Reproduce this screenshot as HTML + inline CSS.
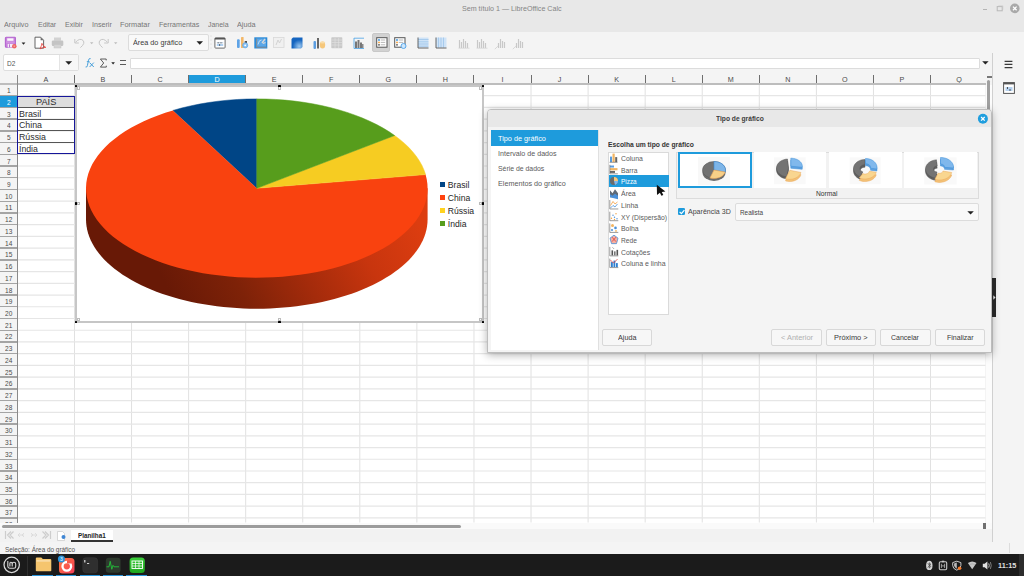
<!DOCTYPE html><html><head><meta charset="utf-8"><style>
html,body{margin:0;padding:0}
body{width:1024px;height:576px;overflow:hidden;position:relative;background:#f4f4f4;font-family:"Liberation Sans",sans-serif}
.a{position:absolute}
.t{position:absolute;white-space:nowrap}
svg{overflow:visible}
</style></head><body>
<div class="a" style="left:0px;top:0px;width:1024px;height:31.8px;background:#e8e8e8;"></div>
<div class="t" style="left:461.7px;top:5px;font-size:8px;line-height:8px;color:#858585;transform:scaleX(0.89);transform-origin:0 0;">Sem título 1 — LibreOffice Calc</div>
<div class="a" style="left:983px;top:9.2px;width:4.2px;height:1px;background:#b4b4b4;"></div>
<svg class="a" style="left:996px;top:5px;" width="8" height="7" viewBox="0 0 8 7"><rect x="1.2" y="1.6" width="5" height="4.2" fill="none" stroke="#b8b8b8" stroke-width="1"/><path d="M2.4 0.9h4.4v3.8" fill="none" stroke="#c8c8c8" stroke-width="0.7"/></svg>
<svg class="a" style="left:1009px;top:3px;" width="12" height="11" viewBox="0 0 12 11"><circle cx="5.8" cy="5.4" r="4.8" fill="#a9a9a9"/><path d="M4 3.6l3.6 3.6M7.6 3.6l-3.6 3.6" stroke="#fff" stroke-width="1.3"/></svg>
<div class="t" style="left:4.4px;top:21px;font-size:8px;line-height:8px;color:#767676;transform:scaleX(0.9);transform-origin:0 0;">Arquivo</div>
<div class="t" style="left:37.8px;top:21px;font-size:8px;line-height:8px;color:#767676;transform:scaleX(0.87);transform-origin:0 0;">Editar</div>
<div class="t" style="left:65.4px;top:21px;font-size:8px;line-height:8px;color:#767676;transform:scaleX(0.89);transform-origin:0 0;">Exibir</div>
<div class="t" style="left:91.7px;top:21px;font-size:8px;line-height:8px;color:#767676;transform:scaleX(0.89);transform-origin:0 0;">Inserir</div>
<div class="t" style="left:120.1px;top:21px;font-size:8px;line-height:8px;color:#767676;transform:scaleX(0.92);transform-origin:0 0;">Formatar</div>
<div class="t" style="left:158.6px;top:21px;font-size:8px;line-height:8px;color:#767676;transform:scaleX(0.89);transform-origin:0 0;">Ferramentas</div>
<div class="t" style="left:208px;top:21px;font-size:8px;line-height:8px;color:#767676;transform:scaleX(0.87);transform-origin:0 0;">Janela</div>
<div class="t" style="left:237.3px;top:21px;font-size:8px;line-height:8px;color:#767676;transform:scaleX(0.91);transform-origin:0 0;">Ajuda</div>
<svg class="a" style="left:4px;top:36px;" width="16" height="14" viewBox="0 0 16 14"><rect x="1.4" y="1.3" width="10" height="10" rx="0.8" fill="#c782dc" stroke="#b464cf" stroke-width="1.1"/><rect x="3.2" y="2.3" width="6.3" height="2.5" fill="#fbf6fc"/><path d="M2.2 6.1H10.6" stroke="#dfb0ec" stroke-width="0.6"/><rect x="3.7" y="7.9" width="5.8" height="3.5" fill="#f4ecf7"/><rect x="5" y="8.3" width="1" height="3" fill="#b870d0"/><circle cx="10.3" cy="10.2" r="2.3" fill="#ee6666"/><path d="M9.5 10.2h1.6M10.3 9.4v1.6" stroke="#f9c0c0" stroke-width="0.5"/></svg>
<svg class="a" style="left:20.5px;top:41.5px;" width="5" height="4" viewBox="0 0 5 4"><path d="M0.6 0.6h3.8l-1.9 2.1z" fill="#222"/></svg>
<svg class="a" style="left:34px;top:36px;" width="13" height="14" viewBox="0 0 13 14"><path d="M1 1.2H6.6L9.6 4.2V12.2H1Z" fill="#fff" stroke="#555" stroke-width="0.9"/><path d="M6.6 1.2V4.2H9.6Z" fill="#6a6a6a"/><path d="M6 12.8Q7.6 9.8 7.9 7.3Q8.8 10.3 11.8 11.4Q8.8 11.2 6 12.8Z" fill="none" stroke="#e8403a" stroke-width="0.8"/></svg>
<svg class="a" style="left:51px;top:37px;" width="14" height="12" viewBox="0 0 14 12"><rect x="3" y="0.5" width="7" height="3.2" fill="#d2d2d2"/><rect x="0.8" y="3.5" width="11.5" height="5.5" rx="1.2" fill="#c4c4c4"/><rect x="3" y="7.6" width="7" height="3.4" fill="#d4d4d4" stroke="#c4c4c4" stroke-width="0.5"/></svg>
<svg class="a" style="left:73px;top:36px;" width="13" height="13" viewBox="0 0 13 13"><path d="M2.6 6.2Q6.8 1.6 10 4.4Q12.6 7.3 7.4 11.6" fill="none" stroke="#c6c6c6" stroke-width="1"/><path d="M1.8 3V7H5.8" fill="none" stroke="#c6c6c6" stroke-width="1"/></svg>
<svg class="a" style="left:89.5px;top:42px;" width="4" height="3" viewBox="0 0 4 3"><path d="M0 0.3h3.4l-1.7 2z" fill="#bdbdbd"/></svg>
<svg class="a" style="left:97px;top:36px;" width="13" height="13" viewBox="0 0 13 13"><path d="M10.4 6.2Q6.2 1.6 3 4.4Q0.4 7.3 5.6 11.6" fill="none" stroke="#c6c6c6" stroke-width="1"/><path d="M11.2 3V7H7.2" fill="none" stroke="#c6c6c6" stroke-width="1"/></svg>
<svg class="a" style="left:113.5px;top:42px;" width="4" height="3" viewBox="0 0 4 3"><path d="M0 0.3h3.4l-1.7 2z" fill="#bdbdbd"/></svg>
<div class="a" style="left:127.75px;top:33.6px;width:80.75px;height:17.15px;background:#f9f9f9;box-sizing:border-box;border:1px solid #dcdcdc;border-radius:2px"></div>
<div class="t" style="left:133.1px;top:39px;font-size:7.8px;line-height:7.8px;color:#3a3a3a;transform:scaleX(0.93);transform-origin:0 0;">Área do gráfico</div>
<svg class="a" style="left:196px;top:41px;" width="8" height="4" viewBox="0 0 8 4"><path d="M0.5 0.3h6.5l-3.25 3.4z" fill="#222"/></svg>
<svg class="a" style="left:209.5px;top:34px;" width="2" height="17" viewBox="0 0 2 17"><circle cx="1" cy="2" r="0.5" fill="#ccc"/><circle cx="1" cy="6" r="0.5" fill="#ccc"/><circle cx="1" cy="10" r="0.5" fill="#ccc"/><circle cx="1" cy="14" r="0.5" fill="#ccc"/></svg>
<svg class="a" style="left:214px;top:36.5px;" width="12" height="12" viewBox="0 0 12 12"><rect x="0.9" y="0.9" width="10.2" height="10.2" rx="0.8" fill="#fff" stroke="#6a6a6a" stroke-width="1"/><rect x="0.9" y="0.9" width="10.2" height="1.6" fill="#555"/><path d="M2.8 5.8h6.4" stroke="#8aa6c4" stroke-width="0.7"/><path d="M2.8 8h6.4" stroke="#3d8ad8" stroke-width="0.8"/><path d="M4.2 5.2v1.2M7 5.2v1.2" stroke="#555" stroke-width="0.8"/><path d="M5.6 7.3v1.4" stroke="#333" stroke-width="0.9"/></svg>
<svg class="a" style="left:236px;top:36px;" width="14" height="13" viewBox="0 0 14 13"><rect x="1" y="3.3" width="2.7" height="8.7" rx="1" fill="#5ea3e6"/><rect x="5" y="1" width="2.6" height="11" rx="0.6" fill="#f3b869"/><rect x="8.7" y="5" width="2.3" height="2" fill="#555"/><circle cx="9.2" cy="9.3" r="2.6" fill="#8cc2f2" stroke="#4d9de6" stroke-width="0.6"/><circle cx="9.2" cy="9.3" r="0.9" fill="#fff"/></svg>
<svg class="a" style="left:253.5px;top:36.5px;" width="14" height="12" viewBox="0 0 14 12"><rect x="0.3" y="0.3" width="13" height="11.2" fill="#2b8ad8"/><rect x="2.2" y="1.5" width="9.8" height="8.2" fill="#5aa7e8"/><path d="M2.6 1.5v8.8h10" fill="none" stroke="#8a8a8a" stroke-width="0.9"/><path d="M4 7.5q1-5 3.5-4.5" fill="none" stroke="#e8f2fb" stroke-width="0.7"/><path d="M8 6l3-4M9 6.5l2.5-1" stroke="#d8d8d8" stroke-width="1.3"/></svg>
<svg class="a" style="left:272.5px;top:37px;" width="12" height="11" viewBox="0 0 12 11"><rect x="0.5" y="0.5" width="10.5" height="10" fill="#f0f0f0" stroke="#d8d8d8" stroke-width="0.8"/><path d="M3 8l2-5 1.5 3 2-4" fill="none" stroke="#cfcfcf" stroke-width="0.9"/></svg>
<svg class="a" style="left:290.5px;top:37px;" width="12" height="12" viewBox="0 0 12 12"><defs><radialGradient id="ge" cx="0.7" cy="0.8" r="0.6"><stop offset="0" stop-color="#9cc8f0"/><stop offset="1" stop-color="#1565c0"/></radialGradient></defs><path d="M2 0.5h9.5v9.5l-1.5 1.5h-9.5v-9.5z" fill="url(#ge)"/></svg>
<svg class="a" style="left:312.5px;top:36.5px;" width="14" height="13" viewBox="0 0 14 13"><rect x="0.5" y="4" width="2.5" height="8" rx="1" fill="#5b9de0"/><rect x="4" y="1" width="2" height="10.5" fill="#666"/><ellipse cx="9.5" cy="8" rx="2.7" ry="3.6" fill="#f6c77a"/><ellipse cx="9.5" cy="5.5" rx="2.7" ry="1" fill="#f9dca8"/></svg>
<svg class="a" style="left:331px;top:36.8px;" width="12" height="12" viewBox="0 0 12 12"><rect x="0.3" y="0.3" width="11" height="11" rx="0.8" fill="#c9c9c9"/><path d="M0.5 3h10.8M0.5 5.5h10.8M0.5 8h10.8M4 1v10M7.6 1v10" stroke="#e2e2e2" stroke-width="0.6"/></svg>
<svg class="a" style="left:353px;top:36.5px;" width="12" height="12" viewBox="0 0 12 12"><path d="M1 1.2h10" stroke="#5aa9e6" stroke-width="0.9"/><path d="M1 1v10.5h10" fill="none" stroke="#5aa9e6" stroke-width="0.9"/><rect x="2" y="4.5" width="2" height="6.5" fill="#777"/><rect x="4.5" y="3" width="2" height="8" fill="#777"/><rect x="7" y="5.5" width="2" height="5.5" fill="#777"/><rect x="9" y="7" width="1.5" height="4" fill="#888"/></svg>
<div class="a" style="left:372px;top:33.3px;width:18px;height:18.4px;background:#d2d2d2;box-sizing:border-box;border:1px solid #c8c8c8;border-radius:2px"></div>
<svg class="a" style="left:375.5px;top:37px;" width="12" height="11" viewBox="0 0 12 11"><rect x="0.7" y="0.7" width="10.3" height="9.5" fill="#fff" stroke="#555" stroke-width="1"/><circle cx="3" cy="3" r="0.9" fill="#2f8fdc"/><circle cx="3" cy="5.4" r="0.9" fill="#f39c34"/><circle cx="3" cy="7.8" r="0.9" fill="#555"/><path d="M4.7 3h4.5M4.7 5.4h4.5M4.7 7.8h4.5" stroke="#999" stroke-width="0.7"/></svg>
<svg class="a" style="left:393.5px;top:37px;" width="13" height="12" viewBox="0 0 13 12"><rect x="0.7" y="0.7" width="10.3" height="9.5" fill="#fff" stroke="#555" stroke-width="1"/><circle cx="3" cy="3" r="0.9" fill="#2f8fdc"/><circle cx="3" cy="5.4" r="0.9" fill="#f39c34"/><circle cx="3" cy="7.8" r="0.9" fill="#555"/><path d="M4.7 3h4.5M4.7 5.4h4.5" stroke="#999" stroke-width="0.7"/><circle cx="9.5" cy="9" r="2.5" fill="#cfe6fb" stroke="#4da3ea" stroke-width="0.9"/></svg>
<svg class="a" style="left:416.5px;top:37px;" width="13" height="12" viewBox="0 0 13 12"><rect x="1" y="0.5" width="10.5" height="10" fill="#cfe3f7"/><path d="M1 2.5h10.5M1 4.8h10.5M1 7h10.5M1 9.2h10.5" stroke="#8bbbe6" stroke-width="0.6"/><path d="M1 0.5v10.5h10.5" fill="none" stroke="#555" stroke-width="0.9"/></svg>
<svg class="a" style="left:434.5px;top:37px;" width="13" height="12" viewBox="0 0 13 12"><rect x="1" y="0.5" width="10.5" height="10" fill="#cfe3f7"/><path d="M3.5 0.5v10M6 0.5v10M8.5 0.5v10" stroke="#8bbbe6" stroke-width="0.6"/><path d="M1 0.5v10.5h10.5" fill="none" stroke="#555" stroke-width="0.9"/></svg>
<svg class="a" style="left:457.5px;top:37px;" width="12" height="12" viewBox="0 0 12 12"><path d="M1.5 3v8M3.5 5v6M5.5 2v9M7.5 4v7M9.5 6v5" stroke="#c8c8c8" stroke-width="1.2"/><path d="M0.5 11.2h11" stroke="#d0d0d0" stroke-width="0.7"/></svg>
<svg class="a" style="left:475.5px;top:37px;" width="12" height="12" viewBox="0 0 12 12"><path d="M1.5 3v8M3.5 5v6M5.5 2v9M7.5 4v7M9.5 6v5" stroke="#c8c8c8" stroke-width="1.2"/><path d="M0.5 11.2h11" stroke="#d0d0d0" stroke-width="0.7"/></svg>
<svg class="a" style="left:493.5px;top:36.5px;" width="12" height="13" viewBox="0 0 12 13"><path d="M4.5 6v5M6.5 2v9M8.5 4v7M10.5 5v6" stroke="#c8c8c8" stroke-width="1.2"/><path d="M0.8 12.2l3-3" stroke="#cfcfcf" stroke-width="0.8"/></svg>
<svg class="a" style="left:511.5px;top:36.5px;" width="12" height="13" viewBox="0 0 12 13"><path d="M4.5 6v5M6.5 2v9M8.5 4v7M10.5 5v6" stroke="#c8c8c8" stroke-width="1.2"/><path d="M0.8 12.2l3-3" stroke="#cfcfcf" stroke-width="0.8"/></svg>
<div class="a" style="left:2.6px;top:54.2px;width:76px;height:17.2px;background:#ffffff;box-sizing:border-box;border:1px solid #dedede;border-radius:2px"></div>
<div class="a" style="left:58.8px;top:55.3px;width:18.7px;height:15px;background:#f7f7f7;border-left:1px solid #e4e4e4"></div>
<div class="t" style="left:6.9px;top:60px;font-size:7.2px;line-height:7.2px;color:#555;transform:scaleX(0.91);transform-origin:0 0;">D2</div>
<svg class="a" style="left:64.5px;top:60.5px;" width="8" height="4" viewBox="0 0 8 4"><path d="M0.3 0.3h6.8l-3.4 3.4z" fill="#222"/></svg>
<svg class="a" style="left:0px;top:0px;" width="1024" height="576" viewBox="0 0 1024 576"><path d="M90.6 58.6 Q89 58 88.5 60.2 L87.4 65.6 Q87 67.6 85.6 67" fill="none" stroke="#3d9ad8" stroke-width="0.95"/><path d="M86.8 61.6 H89.6" stroke="#3d9ad8" stroke-width="0.8"/><path d="M89.6 62.6 L93.8 67 M93.8 62.6 L89.6 67" stroke="#3d9ad8" stroke-width="0.95"/><path d="M106.2 60.4 V59 H100.4 L103.7 63 L100.4 67.1 H106.3 V65.7" fill="none" stroke="#4a4a4a" stroke-width="0.9" stroke-linejoin="miter"/></svg>
<svg class="a" style="left:111px;top:62px;" width="5" height="3" viewBox="0 0 5 3"><path d="M0.3 0.2h3.6l-1.8 2.2z" fill="#222"/></svg>
<div class="a" style="left:120.3px;top:60.2px;width:6.2px;height:1.1px;background:#5a5a5a;"></div>
<div class="a" style="left:120.3px;top:63.6px;width:6.2px;height:1.1px;background:#5a5a5a;"></div>
<div class="a" style="left:130.2px;top:57.5px;width:850px;height:11px;background:#ffffff;box-sizing:border-box;border:1px solid #dcdcdc;border-radius:1px"></div>
<svg class="a" style="left:982px;top:60.5px;" width="7" height="4" viewBox="0 0 7 4"><path d="M0.2 0.2h6.4l-3.2 3.4z" fill="#222"/></svg>
<div class="a" style="left:992.2px;top:53.2px;width:0.9px;height:489px;background:#d6d6d6;"></div>
<svg class="a" style="left:1004px;top:59.5px;" width="10" height="9" viewBox="0 0 10 9"><path d="M0.6 1.3h7.8M0.6 4.4h7.8M0.6 7.6h7.8" stroke="#3a3a3a" stroke-width="1.2"/></svg>
<svg class="a" style="left:1002.5px;top:81.5px;" width="12" height="12" viewBox="0 0 12 12"><rect x="0.6" y="0.6" width="10.8" height="10.8" fill="#fff" stroke="#555" stroke-width="1"/><rect x="0.6" y="0.6" width="10.8" height="1.8" fill="#555"/><path d="M2.5 6h7M2.5 8h7" stroke="#4a90d9" stroke-width="0.8"/><path d="M4.5 5v2M7 7v2" stroke="#333" stroke-width="0.8"/></svg>
<div class="a" style="left:0px;top:74.8px;width:985.5px;height:8.8px;background:#f4f4f4;"></div>
<div class="a" style="left:18.4px;top:85px;width:967.1px;height:437.5px;background:#ffffff;"></div>
<svg class="a" style="left:0px;top:0px;pointer-events:none" width="1024" height="576" viewBox="0 0 1024 576"><path d="M74.47 85 V522.5" stroke="#e1e1e1" stroke-width="1"/><path d="M131.54 85 V522.5" stroke="#e1e1e1" stroke-width="1"/><path d="M188.61 85 V522.5" stroke="#e1e1e1" stroke-width="1"/><path d="M245.68 85 V522.5" stroke="#e1e1e1" stroke-width="1"/><path d="M302.75 85 V522.5" stroke="#e1e1e1" stroke-width="1"/><path d="M359.82 85 V522.5" stroke="#e1e1e1" stroke-width="1"/><path d="M416.89 85 V522.5" stroke="#e1e1e1" stroke-width="1"/><path d="M473.96 85 V522.5" stroke="#e1e1e1" stroke-width="1"/><path d="M531.03 85 V522.5" stroke="#e1e1e1" stroke-width="1"/><path d="M588.1 85 V522.5" stroke="#e1e1e1" stroke-width="1"/><path d="M645.17 85 V522.5" stroke="#e1e1e1" stroke-width="1"/><path d="M702.24 85 V522.5" stroke="#e1e1e1" stroke-width="1"/><path d="M759.31 85 V522.5" stroke="#e1e1e1" stroke-width="1"/><path d="M816.38 85 V522.5" stroke="#e1e1e1" stroke-width="1"/><path d="M873.45 85 V522.5" stroke="#e1e1e1" stroke-width="1"/><path d="M930.52 85 V522.5" stroke="#e1e1e1" stroke-width="1"/><path d="M17.4 95.63 H985.5" stroke="#e6e6e6" stroke-width="1.2"/><path d="M17.4 107.36 H985.5" stroke="#e6e6e6" stroke-width="1.2"/><path d="M17.4 119.09 H985.5" stroke="#e6e6e6" stroke-width="1.2"/><path d="M17.4 130.82 H985.5" stroke="#e6e6e6" stroke-width="1.2"/><path d="M17.4 142.55 H985.5" stroke="#e6e6e6" stroke-width="1.2"/><path d="M17.4 154.28 H985.5" stroke="#e6e6e6" stroke-width="1.2"/><path d="M17.4 166.01 H985.5" stroke="#e6e6e6" stroke-width="1.2"/><path d="M17.4 177.74 H985.5" stroke="#e6e6e6" stroke-width="1.2"/><path d="M17.4 189.47 H985.5" stroke="#e6e6e6" stroke-width="1.2"/><path d="M17.4 201.2 H985.5" stroke="#e6e6e6" stroke-width="1.2"/><path d="M17.4 212.93 H985.5" stroke="#e6e6e6" stroke-width="1.2"/><path d="M17.4 224.66 H985.5" stroke="#e6e6e6" stroke-width="1.2"/><path d="M17.4 236.39 H985.5" stroke="#e6e6e6" stroke-width="1.2"/><path d="M17.4 248.12 H985.5" stroke="#e6e6e6" stroke-width="1.2"/><path d="M17.4 259.85 H985.5" stroke="#e6e6e6" stroke-width="1.2"/><path d="M17.4 271.58 H985.5" stroke="#e6e6e6" stroke-width="1.2"/><path d="M17.4 283.31 H985.5" stroke="#e6e6e6" stroke-width="1.2"/><path d="M17.4 295.04 H985.5" stroke="#e6e6e6" stroke-width="1.2"/><path d="M17.4 306.77 H985.5" stroke="#e6e6e6" stroke-width="1.2"/><path d="M17.4 318.5 H985.5" stroke="#e6e6e6" stroke-width="1.2"/><path d="M17.4 330.23 H985.5" stroke="#e6e6e6" stroke-width="1.2"/><path d="M17.4 341.96 H985.5" stroke="#e6e6e6" stroke-width="1.2"/><path d="M17.4 353.69 H985.5" stroke="#e6e6e6" stroke-width="1.2"/><path d="M17.4 365.42 H985.5" stroke="#e6e6e6" stroke-width="1.2"/><path d="M17.4 377.15 H985.5" stroke="#e6e6e6" stroke-width="1.2"/><path d="M17.4 388.88 H985.5" stroke="#e6e6e6" stroke-width="1.2"/><path d="M17.4 400.61 H985.5" stroke="#e6e6e6" stroke-width="1.2"/><path d="M17.4 412.34 H985.5" stroke="#e6e6e6" stroke-width="1.2"/><path d="M17.4 424.07 H985.5" stroke="#e6e6e6" stroke-width="1.2"/><path d="M17.4 435.8 H985.5" stroke="#e6e6e6" stroke-width="1.2"/><path d="M17.4 447.53 H985.5" stroke="#e6e6e6" stroke-width="1.2"/><path d="M17.4 459.26 H985.5" stroke="#e6e6e6" stroke-width="1.2"/><path d="M17.4 470.99 H985.5" stroke="#e6e6e6" stroke-width="1.2"/><path d="M17.4 482.72 H985.5" stroke="#e6e6e6" stroke-width="1.2"/><path d="M17.4 494.45 H985.5" stroke="#e6e6e6" stroke-width="1.2"/><path d="M17.4 506.18 H985.5" stroke="#e6e6e6" stroke-width="1.2"/><path d="M17.4 517.91 H985.5" stroke="#e6e6e6" stroke-width="1.2"/></svg>
<div class="t" style="left:43.53px;top:76px;font-size:7.2px;line-height:7.2px;color:#4a4a4a;">A</div>
<div class="a" style="left:73.97px;top:75px;width:1px;height:9px;background:#6e6e6e;"></div>
<div class="t" style="left:100.6px;top:76px;font-size:7.2px;line-height:7.2px;color:#4a4a4a;">B</div>
<div class="a" style="left:131.04px;top:75px;width:1px;height:9px;background:#6e6e6e;"></div>
<div class="t" style="left:157.48px;top:76px;font-size:7.2px;line-height:7.2px;color:#4a4a4a;">C</div>
<div class="a" style="left:188.11px;top:75px;width:1px;height:9px;background:#6e6e6e;"></div>
<div class="a" style="left:188.61px;top:74.8px;width:57.07px;height:9px;background:#1e9bdc;"></div>
<div class="t" style="left:214.55px;top:76px;font-size:7.2px;line-height:7.2px;color:#ffffff;">D</div>
<div class="a" style="left:245.18px;top:75px;width:1px;height:9px;background:#6e6e6e;"></div>
<div class="t" style="left:271.81px;top:76px;font-size:7.2px;line-height:7.2px;color:#4a4a4a;">E</div>
<div class="a" style="left:302.25px;top:75px;width:1px;height:9px;background:#6e6e6e;"></div>
<div class="t" style="left:329.09px;top:76px;font-size:7.2px;line-height:7.2px;color:#4a4a4a;">F</div>
<div class="a" style="left:359.32px;top:75px;width:1px;height:9px;background:#6e6e6e;"></div>
<div class="t" style="left:385.55px;top:76px;font-size:7.2px;line-height:7.2px;color:#4a4a4a;">G</div>
<div class="a" style="left:416.39px;top:75px;width:1px;height:9px;background:#6e6e6e;"></div>
<div class="t" style="left:442.83px;top:76px;font-size:7.2px;line-height:7.2px;color:#4a4a4a;">H</div>
<div class="a" style="left:473.46px;top:75px;width:1px;height:9px;background:#6e6e6e;"></div>
<div class="t" style="left:501.49px;top:76px;font-size:7.2px;line-height:7.2px;color:#4a4a4a;">I</div>
<div class="a" style="left:530.53px;top:75px;width:1px;height:9px;background:#6e6e6e;"></div>
<div class="t" style="left:557.76px;top:76px;font-size:7.2px;line-height:7.2px;color:#4a4a4a;">J</div>
<div class="a" style="left:587.6px;top:75px;width:1px;height:9px;background:#6e6e6e;"></div>
<div class="t" style="left:614.23px;top:76px;font-size:7.2px;line-height:7.2px;color:#4a4a4a;">K</div>
<div class="a" style="left:644.67px;top:75px;width:1px;height:9px;background:#6e6e6e;"></div>
<div class="t" style="left:671.7px;top:76px;font-size:7.2px;line-height:7.2px;color:#4a4a4a;">L</div>
<div class="a" style="left:701.74px;top:75px;width:1px;height:9px;background:#6e6e6e;"></div>
<div class="t" style="left:727.78px;top:76px;font-size:7.2px;line-height:7.2px;color:#4a4a4a;">M</div>
<div class="a" style="left:758.81px;top:75px;width:1px;height:9px;background:#6e6e6e;"></div>
<div class="t" style="left:785.25px;top:76px;font-size:7.2px;line-height:7.2px;color:#4a4a4a;">N</div>
<div class="a" style="left:815.88px;top:75px;width:1px;height:9px;background:#6e6e6e;"></div>
<div class="t" style="left:842.11px;top:76px;font-size:7.2px;line-height:7.2px;color:#4a4a4a;">O</div>
<div class="a" style="left:872.95px;top:75px;width:1px;height:9px;background:#6e6e6e;"></div>
<div class="t" style="left:899.58px;top:76px;font-size:7.2px;line-height:7.2px;color:#4a4a4a;">P</div>
<div class="a" style="left:930.02px;top:75px;width:1px;height:9px;background:#6e6e6e;"></div>
<div class="t" style="left:956.25px;top:76px;font-size:7.2px;line-height:7.2px;color:#4a4a4a;">Q</div>
<div class="a" style="left:16.9px;top:75px;width:1px;height:9px;background:#6e6e6e;"></div>
<div class="a" style="left:0px;top:83.1px;width:985.5px;height:1.9px;background:#bdbdbd;"></div>
<div class="a" style="left:0px;top:85px;width:17.4px;height:437.5px;background:#f4f4f4;"></div>
<div class="a" style="left:17px;top:75px;width:1.2px;height:447.5px;background:#8a8a8a;"></div>
<div class="t" style="left:6.87px;top:87px;font-size:7.6px;line-height:7.6px;color:#4a4a4a;transform:scaleX(0.86);transform-origin:0 0;">1</div>
<div class="a" style="left:0px;top:94.93px;width:17px;height:1.4px;background:#a4a4a4;"></div>
<div class="a" style="left:0px;top:95.63px;width:17px;height:11.73px;background:#1e9bdc;"></div>
<div class="t" style="left:6.87px;top:99px;font-size:7.6px;line-height:7.6px;color:#ffffff;transform:scaleX(0.86);transform-origin:0 0;">2</div>
<div class="a" style="left:0px;top:106.66px;width:17px;height:1.4px;background:#a4a4a4;"></div>
<div class="t" style="left:6.87px;top:111px;font-size:7.6px;line-height:7.6px;color:#4a4a4a;transform:scaleX(0.86);transform-origin:0 0;">3</div>
<div class="a" style="left:0px;top:118.39px;width:17px;height:1.4px;background:#a4a4a4;"></div>
<div class="t" style="left:6.87px;top:122px;font-size:7.6px;line-height:7.6px;color:#4a4a4a;transform:scaleX(0.86);transform-origin:0 0;">4</div>
<div class="a" style="left:0px;top:130.12px;width:17px;height:1.4px;background:#a4a4a4;"></div>
<div class="t" style="left:6.87px;top:134px;font-size:7.6px;line-height:7.6px;color:#4a4a4a;transform:scaleX(0.86);transform-origin:0 0;">5</div>
<div class="a" style="left:0px;top:141.85px;width:17px;height:1.4px;background:#a4a4a4;"></div>
<div class="t" style="left:6.87px;top:146px;font-size:7.6px;line-height:7.6px;color:#4a4a4a;transform:scaleX(0.86);transform-origin:0 0;">6</div>
<div class="a" style="left:0px;top:153.58px;width:17px;height:1.4px;background:#a4a4a4;"></div>
<div class="t" style="left:6.87px;top:158px;font-size:7.6px;line-height:7.6px;color:#4a4a4a;transform:scaleX(0.86);transform-origin:0 0;">7</div>
<div class="a" style="left:0px;top:165.31px;width:17px;height:1.4px;background:#a4a4a4;"></div>
<div class="t" style="left:6.87px;top:169px;font-size:7.6px;line-height:7.6px;color:#4a4a4a;transform:scaleX(0.86);transform-origin:0 0;">8</div>
<div class="a" style="left:0px;top:177.04px;width:17px;height:1.4px;background:#a4a4a4;"></div>
<div class="t" style="left:6.87px;top:181px;font-size:7.6px;line-height:7.6px;color:#4a4a4a;transform:scaleX(0.86);transform-origin:0 0;">9</div>
<div class="a" style="left:0px;top:188.77px;width:17px;height:1.4px;background:#a4a4a4;"></div>
<div class="t" style="left:5.05px;top:193px;font-size:7.6px;line-height:7.6px;color:#4a4a4a;transform:scaleX(0.86);transform-origin:0 0;">10</div>
<div class="a" style="left:0px;top:200.5px;width:17px;height:1.4px;background:#a4a4a4;"></div>
<div class="t" style="left:5.05px;top:204px;font-size:7.6px;line-height:7.6px;color:#4a4a4a;transform:scaleX(0.93);transform-origin:0 0;">11</div>
<div class="a" style="left:0px;top:212.23px;width:17px;height:1.4px;background:#a4a4a4;"></div>
<div class="t" style="left:5.05px;top:216px;font-size:7.6px;line-height:7.6px;color:#4a4a4a;transform:scaleX(0.86);transform-origin:0 0;">12</div>
<div class="a" style="left:0px;top:223.96px;width:17px;height:1.4px;background:#a4a4a4;"></div>
<div class="t" style="left:5.05px;top:228px;font-size:7.6px;line-height:7.6px;color:#4a4a4a;transform:scaleX(0.86);transform-origin:0 0;">13</div>
<div class="a" style="left:0px;top:235.69px;width:17px;height:1.4px;background:#a4a4a4;"></div>
<div class="t" style="left:5.05px;top:240px;font-size:7.6px;line-height:7.6px;color:#4a4a4a;transform:scaleX(0.86);transform-origin:0 0;">14</div>
<div class="a" style="left:0px;top:247.42px;width:17px;height:1.4px;background:#a4a4a4;"></div>
<div class="t" style="left:5.05px;top:251px;font-size:7.6px;line-height:7.6px;color:#4a4a4a;transform:scaleX(0.86);transform-origin:0 0;">15</div>
<div class="a" style="left:0px;top:259.15px;width:17px;height:1.4px;background:#a4a4a4;"></div>
<div class="t" style="left:5.05px;top:263px;font-size:7.6px;line-height:7.6px;color:#4a4a4a;transform:scaleX(0.86);transform-origin:0 0;">16</div>
<div class="a" style="left:0px;top:270.88px;width:17px;height:1.4px;background:#a4a4a4;"></div>
<div class="t" style="left:5.05px;top:275px;font-size:7.6px;line-height:7.6px;color:#4a4a4a;transform:scaleX(0.86);transform-origin:0 0;">17</div>
<div class="a" style="left:0px;top:282.61px;width:17px;height:1.4px;background:#a4a4a4;"></div>
<div class="t" style="left:5.05px;top:287px;font-size:7.6px;line-height:7.6px;color:#4a4a4a;transform:scaleX(0.86);transform-origin:0 0;">18</div>
<div class="a" style="left:0px;top:294.34px;width:17px;height:1.4px;background:#a4a4a4;"></div>
<div class="t" style="left:5.05px;top:298px;font-size:7.6px;line-height:7.6px;color:#4a4a4a;transform:scaleX(0.86);transform-origin:0 0;">19</div>
<div class="a" style="left:0px;top:306.07px;width:17px;height:1.4px;background:#a4a4a4;"></div>
<div class="t" style="left:5.05px;top:310px;font-size:7.6px;line-height:7.6px;color:#4a4a4a;transform:scaleX(0.86);transform-origin:0 0;">20</div>
<div class="a" style="left:0px;top:317.8px;width:17px;height:1.4px;background:#a4a4a4;"></div>
<div class="t" style="left:5.05px;top:322px;font-size:7.6px;line-height:7.6px;color:#4a4a4a;transform:scaleX(0.86);transform-origin:0 0;">21</div>
<div class="a" style="left:0px;top:329.53px;width:17px;height:1.4px;background:#a4a4a4;"></div>
<div class="t" style="left:5.05px;top:333px;font-size:7.6px;line-height:7.6px;color:#4a4a4a;transform:scaleX(0.86);transform-origin:0 0;">22</div>
<div class="a" style="left:0px;top:341.26px;width:17px;height:1.4px;background:#a4a4a4;"></div>
<div class="t" style="left:5.05px;top:345px;font-size:7.6px;line-height:7.6px;color:#4a4a4a;transform:scaleX(0.86);transform-origin:0 0;">23</div>
<div class="a" style="left:0px;top:352.99px;width:17px;height:1.4px;background:#a4a4a4;"></div>
<div class="t" style="left:5.05px;top:357px;font-size:7.6px;line-height:7.6px;color:#4a4a4a;transform:scaleX(0.86);transform-origin:0 0;">24</div>
<div class="a" style="left:0px;top:364.72px;width:17px;height:1.4px;background:#a4a4a4;"></div>
<div class="t" style="left:5.05px;top:369px;font-size:7.6px;line-height:7.6px;color:#4a4a4a;transform:scaleX(0.86);transform-origin:0 0;">25</div>
<div class="a" style="left:0px;top:376.45px;width:17px;height:1.4px;background:#a4a4a4;"></div>
<div class="t" style="left:5.05px;top:380px;font-size:7.6px;line-height:7.6px;color:#4a4a4a;transform:scaleX(0.86);transform-origin:0 0;">26</div>
<div class="a" style="left:0px;top:388.18px;width:17px;height:1.4px;background:#a4a4a4;"></div>
<div class="t" style="left:5.05px;top:392px;font-size:7.6px;line-height:7.6px;color:#4a4a4a;transform:scaleX(0.86);transform-origin:0 0;">27</div>
<div class="a" style="left:0px;top:399.91px;width:17px;height:1.4px;background:#a4a4a4;"></div>
<div class="t" style="left:5.05px;top:404px;font-size:7.6px;line-height:7.6px;color:#4a4a4a;transform:scaleX(0.86);transform-origin:0 0;">28</div>
<div class="a" style="left:0px;top:411.64px;width:17px;height:1.4px;background:#a4a4a4;"></div>
<div class="t" style="left:5.05px;top:416px;font-size:7.6px;line-height:7.6px;color:#4a4a4a;transform:scaleX(0.86);transform-origin:0 0;">29</div>
<div class="a" style="left:0px;top:423.37px;width:17px;height:1.4px;background:#a4a4a4;"></div>
<div class="t" style="left:5.05px;top:427px;font-size:7.6px;line-height:7.6px;color:#4a4a4a;transform:scaleX(0.86);transform-origin:0 0;">30</div>
<div class="a" style="left:0px;top:435.1px;width:17px;height:1.4px;background:#a4a4a4;"></div>
<div class="t" style="left:5.05px;top:439px;font-size:7.6px;line-height:7.6px;color:#4a4a4a;transform:scaleX(0.86);transform-origin:0 0;">31</div>
<div class="a" style="left:0px;top:446.83px;width:17px;height:1.4px;background:#a4a4a4;"></div>
<div class="t" style="left:5.05px;top:451px;font-size:7.6px;line-height:7.6px;color:#4a4a4a;transform:scaleX(0.86);transform-origin:0 0;">32</div>
<div class="a" style="left:0px;top:458.56px;width:17px;height:1.4px;background:#a4a4a4;"></div>
<div class="t" style="left:5.05px;top:463px;font-size:7.6px;line-height:7.6px;color:#4a4a4a;transform:scaleX(0.86);transform-origin:0 0;">33</div>
<div class="a" style="left:0px;top:470.29px;width:17px;height:1.4px;background:#a4a4a4;"></div>
<div class="t" style="left:5.05px;top:474px;font-size:7.6px;line-height:7.6px;color:#4a4a4a;transform:scaleX(0.86);transform-origin:0 0;">34</div>
<div class="a" style="left:0px;top:482.02px;width:17px;height:1.4px;background:#a4a4a4;"></div>
<div class="t" style="left:5.05px;top:486px;font-size:7.6px;line-height:7.6px;color:#4a4a4a;transform:scaleX(0.86);transform-origin:0 0;">35</div>
<div class="a" style="left:0px;top:493.75px;width:17px;height:1.4px;background:#a4a4a4;"></div>
<div class="t" style="left:5.05px;top:498px;font-size:7.6px;line-height:7.6px;color:#4a4a4a;transform:scaleX(0.86);transform-origin:0 0;">36</div>
<div class="a" style="left:0px;top:505.48px;width:17px;height:1.4px;background:#a4a4a4;"></div>
<div class="t" style="left:5.05px;top:509px;font-size:7.6px;line-height:7.6px;color:#4a4a4a;transform:scaleX(0.86);transform-origin:0 0;">37</div>
<div class="a" style="left:0px;top:517.21px;width:17px;height:1.4px;background:#a4a4a4;"></div>
<div class="t" style="left:5.05px;top:521px;font-size:7.6px;line-height:7.6px;color:#4a4a4a;transform:scaleX(0.86);transform-origin:0 0;">38</div>
<div class="a" style="left:0px;top:528.94px;width:17px;height:1.4px;background:#a4a4a4;"></div>
<div class="a" style="left:17.9px;top:95.63px;width:56.07px;height:11.73px;background:#dddddd;"></div>
<div class="a" style="left:17.4px;top:106.86px;width:57.07px;height:1px;background:#555;"></div>
<div class="a" style="left:17.4px;top:118.59px;width:57.07px;height:1px;background:#555;"></div>
<div class="a" style="left:17.4px;top:130.32px;width:57.07px;height:1px;background:#555;"></div>
<div class="a" style="left:17.4px;top:142.05px;width:57.07px;height:1px;background:#555;"></div>
<div class="a" style="left:17.4px;top:95.6px;width:57.5px;height:58.9px;background:transparent;box-sizing:border-box;border:1.4px solid #16169a"></div>
<div class="t" style="left:35.8px;top:97px;font-size:9.4px;line-height:9.4px;color:#2e2e2e;transform:scaleX(0.98);transform-origin:0 0;">PAÍS</div>
<div class="t" style="left:18.6px;top:109px;font-size:9.4px;line-height:9.4px;color:#2e2e2e;transform:scaleX(0.95);transform-origin:0 0;">Brasil</div>
<div class="t" style="left:18.6px;top:120px;font-size:9.4px;line-height:9.4px;color:#2e2e2e;transform:scaleX(0.94);transform-origin:0 0;">China</div>
<div class="t" style="left:18.6px;top:132px;font-size:9.4px;line-height:9.4px;color:#2e2e2e;transform:scaleX(0.94);transform-origin:0 0;">Rússia</div>
<div class="t" style="left:18.6px;top:144px;font-size:9.4px;line-height:9.4px;color:#2e2e2e;transform:scaleX(0.93);transform-origin:0 0;">Índia</div>
<div class="a" style="left:75px;top:85px;width:409px;height:237.8px;background:#ffffff;box-sizing:border-box;border:2px solid #c6c6c6"></div>
<svg class="a" style="left:0px;top:0px;" width="1024" height="576" viewBox="0 0 1024 576"><defs><linearGradient id="side" x1="180" y1="310" x2="400" y2="190" gradientUnits="userSpaceOnUse"><stop offset="0" stop-color="#681906"/><stop offset="0.25" stop-color="#7e2208"/><stop offset="0.5" stop-color="#a42b0b"/><stop offset="0.75" stop-color="#c8350e"/><stop offset="1" stop-color="#dc3d10"/></linearGradient></defs><path d="M86 188.3 L86 219.3 L86.13 222.81 L86.53 226.31 L87.18 229.81 L88.1 233.29 L89.28 236.74 L90.72 240.17 L92.41 243.57 L94.36 246.93 L96.56 250.24 L99 253.51 L101.69 256.73 L104.62 259.89 L107.78 262.98 L111.17 266.01 L114.78 268.97 L118.62 271.85 L122.67 274.65 L126.92 277.36 L131.38 279.98 L136.03 282.52 L140.86 284.95 L145.87 287.28 L151.06 289.51 L156.41 291.63 L161.91 293.63 L167.56 295.53 L173.34 297.3 L179.26 298.96 L185.29 300.49 L191.44 301.89 L197.68 303.17 L204.02 304.32 L210.44 305.34 L216.93 306.23 L223.48 306.98 L230.08 307.6 L236.72 308.08 L243.4 308.42 L250.09 308.63 L256.8 308.7 L263.51 308.63 L270.2 308.42 L276.88 308.08 L283.52 307.6 L290.12 306.98 L296.67 306.23 L303.16 305.34 L309.58 304.32 L315.92 303.17 L322.16 301.89 L328.31 300.49 L334.34 298.96 L340.26 297.3 L346.04 295.53 L351.69 293.63 L357.19 291.63 L362.54 289.51 L367.73 287.28 L372.74 284.95 L377.57 282.52 L382.22 279.98 L386.68 277.36 L390.93 274.65 L394.98 271.85 L398.82 268.97 L402.43 266.01 L405.82 262.98 L408.98 259.89 L411.91 256.73 L414.6 253.51 L417.04 250.24 L419.24 246.93 L421.19 243.57 L422.88 240.17 L424.32 236.74 L425.5 233.29 L426.42 229.81 L427.07 226.31 L427.47 222.81 L427.6 219.3 L427.6 188.3 Z" fill="url(#side)"/><path d="M256.8 188.3 L256.8 98.9 L247.07 99.05 L237.37 99.48 L227.73 100.2 L218.18 101.21 L208.77 102.51 L199.5 104.08 L190.43 105.93 L181.57 108.04 L172.95 110.41 Z" fill="#004586" stroke="#004586" stroke-width="0.5" stroke-linejoin="round"/><path d="M256.8 188.3 L172.95 110.41 L165.27 112.82 L157.84 115.44 L150.67 118.25 L143.8 121.26 L137.25 124.45 L131.02 127.82 L125.13 131.35 L119.61 135.05 L114.47 138.88 L109.71 142.86 L105.36 146.95 L101.43 151.17 L97.93 155.48 L94.86 159.88 L92.23 164.37 L90.06 168.92 L88.35 173.52 L87.1 178.16 L86.32 182.83 L86.01 187.51 L86.16 192.2 L86.79 196.88 L87.88 201.53 L89.44 206.15 L91.46 210.71 L93.93 215.22 L96.85 219.65 L100.21 224 L104 228.25 L108.21 232.38 L112.83 236.4 L117.84 240.28 L123.24 244.02 L129 247.61 L135.12 251.04 L141.57 254.29 L148.34 257.36 L155.4 260.24 L162.75 262.93 L170.35 265.4 L178.19 267.67 L186.25 269.72 L194.5 271.54 L202.92 273.14 L211.49 274.5 L220.19 275.62 L228.98 276.51 L237.85 277.15 L246.78 277.55 L255.73 277.7 L264.68 277.6 L273.62 277.27 L282.5 276.68 L291.32 275.86 L300.04 274.79 L308.64 273.48 L317.1 271.94 L325.4 270.17 L333.5 268.18 L341.4 265.96 L349.06 263.54 L356.47 260.9 L363.6 258.07 L370.44 255.04 L376.97 251.83 L383.17 248.45 L389.02 244.9 L394.5 241.19 L399.61 237.34 L404.32 233.35 L408.63 229.24 L412.53 225.02 L415.99 220.7 L419.01 216.29 L421.59 211.8 L423.72 207.24 L425.39 202.64 L426.59 197.99 L427.33 193.32 L427.6 188.63 L427.4 183.95 L426.73 179.27 L425.59 174.62 Z" fill="#f9420f" stroke="#f9420f" stroke-width="0" stroke-linejoin="round"/><path d="M256.8 188.3 L425.59 174.62 L423.96 169.95 L421.87 165.33 L419.3 160.77 L416.28 156.29 L412.81 151.91 L408.89 147.62 L404.55 143.45 L399.79 139.41 L394.63 135.5 Z" fill="#f6cc22" stroke="#f6cc22" stroke-width="0.5" stroke-linejoin="round"/><path d="M256.8 188.3 L394.63 135.5 L388.85 131.6 L382.67 127.87 L376.1 124.32 L369.17 120.97 L361.9 117.83 L354.31 114.9 L346.42 112.19 L338.25 109.72 L329.84 107.49 L321.21 105.5 L312.37 103.76 L303.37 102.29 L294.23 101.07 L284.97 100.12 L275.63 99.44 L266.23 99.04 L256.8 98.9 Z" fill="#579d1c" stroke="#579d1c" stroke-width="0.5" stroke-linejoin="round"/></svg>
<div class="a" style="left:76.6px;top:86.4px;width:3.4px;height:3.4px;background:#fff;box-sizing:border-box;border:0.6px solid #bcbcbc"></div>
<div class="a" style="left:74.9px;top:84.7px;width:2.2px;height:2.2px;background:#000;border-radius:0.6px"></div>
<div class="a" style="left:76.6px;top:201.8px;width:3.4px;height:3.4px;background:#fff;box-sizing:border-box;border:0.6px solid #bcbcbc"></div>
<div class="a" style="left:74.9px;top:202.4px;width:2.2px;height:2.2px;background:#000;border-radius:0.6px"></div>
<div class="a" style="left:76.6px;top:317.8px;width:3.4px;height:3.4px;background:#fff;box-sizing:border-box;border:0.6px solid #bcbcbc"></div>
<div class="a" style="left:74.9px;top:320.7px;width:2.2px;height:2.2px;background:#000;border-radius:0.6px"></div>
<div class="a" style="left:277.8px;top:86.4px;width:3.4px;height:3.4px;background:#fff;box-sizing:border-box;border:0.6px solid #bcbcbc"></div>
<div class="a" style="left:278.4px;top:84.7px;width:2.2px;height:2.2px;background:#000;border-radius:0.6px"></div>
<div class="a" style="left:277.8px;top:317.8px;width:3.4px;height:3.4px;background:#fff;box-sizing:border-box;border:0.6px solid #bcbcbc"></div>
<div class="a" style="left:278.4px;top:320.7px;width:2.2px;height:2.2px;background:#000;border-radius:0.6px"></div>
<div class="a" style="left:479px;top:86.4px;width:3.4px;height:3.4px;background:#fff;box-sizing:border-box;border:0.6px solid #bcbcbc"></div>
<div class="a" style="left:481.9px;top:84.7px;width:2.2px;height:2.2px;background:#000;border-radius:0.6px"></div>
<div class="a" style="left:479px;top:201.8px;width:3.4px;height:3.4px;background:#fff;box-sizing:border-box;border:0.6px solid #bcbcbc"></div>
<div class="a" style="left:481.9px;top:202.4px;width:2.2px;height:2.2px;background:#000;border-radius:0.6px"></div>
<div class="a" style="left:479px;top:317.8px;width:3.4px;height:3.4px;background:#fff;box-sizing:border-box;border:0.6px solid #bcbcbc"></div>
<div class="a" style="left:481.9px;top:320.7px;width:2.2px;height:2.2px;background:#000;border-radius:0.6px"></div>
<div class="a" style="left:439.9px;top:181.9px;width:5.4px;height:5.4px;background:#004586;"></div>
<div class="t" style="left:447.8px;top:181px;font-size:8.6px;line-height:8.6px;color:#262626;">Brasil</div>
<div class="a" style="left:439.9px;top:194.9px;width:5.4px;height:5.4px;background:#ff420e;"></div>
<div class="t" style="left:447.8px;top:194px;font-size:8.6px;line-height:8.6px;color:#262626;">China</div>
<div class="a" style="left:439.9px;top:207.9px;width:5.4px;height:5.4px;background:#ffd320;"></div>
<div class="t" style="left:447.8px;top:207px;font-size:8.6px;line-height:8.6px;color:#262626;">Rússia</div>
<div class="a" style="left:439.9px;top:220.9px;width:5.4px;height:5.4px;background:#579d1c;"></div>
<div class="t" style="left:447.8px;top:220px;font-size:8.6px;line-height:8.6px;color:#262626;">Índia</div>
<div class="a" style="left:985.5px;top:74.8px;width:7px;height:10px;background:#f4f4f4;"></div>
<div class="a" style="left:985.8px;top:84.8px;width:6.4px;height:438px;background:#fcfcfc;"></div>
<div class="a" style="left:986.5px;top:75.5px;width:5px;height:2.2px;background:#777;"></div>
<div class="a" style="left:987.3px;top:79.7px;width:2.9px;height:260px;background:#a0a0a0;border-radius:1.5px"></div>
<div class="a" style="left:0px;top:522.7px;width:992.2px;height:7px;background:#fafafa;"></div>
<div class="a" style="left:983.4px;top:523.4px;width:2.2px;height:5.8px;background:#707070;"></div>
<div class="a" style="left:992.2px;top:53.2px;width:0.9px;height:489px;background:#d0d0d0;"></div>
<div class="a" style="left:2px;top:524.8px;width:458.5px;height:2.9px;background:#9c9c9c;border-radius:1.5px"></div>
<div class="a" style="left:0px;top:529px;width:992.2px;height:12.8px;background:#f2f2f2;"></div>
<div class="a" style="left:0px;top:541.6px;width:1024px;height:0.8px;background:#d4d4d4;"></div>
<svg class="a" style="left:4px;top:530px;" width="50" height="10" viewBox="0 0 50 10"><path d="M1.5 1v8M7 1.5l-3.5 3.5 3.5 3.5M9.5 1.5l-3.5 3.5 3.5 3.5" fill="none" stroke="#cdcdcd" stroke-width="1.2"/><path d="M14 5h6M16 3l-2 2 2 2M20 3l-2 2 2 2" fill="none" stroke="#d8d8d8" stroke-width="0.8"/><path d="M27 5h6M31 3l2 2-2 2M27 3l2 2-2 2" fill="none" stroke="#d8d8d8" stroke-width="0.8"/><path d="M46.5 1v8M41 1.5l3.5 3.5-3.5 3.5M38.5 1.5l3.5 3.5-3.5 3.5" fill="none" stroke="#cdcdcd" stroke-width="1.2"/></svg>
<svg class="a" style="left:57px;top:531px;" width="10" height="10" viewBox="0 0 10 10"><path d="M0.5 0.5h5l2 2v7h-7z" fill="#fff" stroke="#c8c8c8" stroke-width="0.7"/><circle cx="6.5" cy="6" r="2" fill="#3f86d4"/></svg>
<div class="a" style="left:70.9px;top:529.5px;width:42px;height:10.8px;background:#ffffff;"></div>
<div class="a" style="left:70.9px;top:540px;width:42px;height:1.6px;background:#333;"></div>
<div class="t" style="left:77.7px;top:532px;font-size:7.2px;line-height:7.2px;color:#222;font-weight:bold;transform:scaleX(0.88);transform-origin:0 0;">Planilha1</div>
<div class="a" style="left:0px;top:542.4px;width:1024px;height:11.5px;background:#f4f4f4;"></div>
<div class="t" style="left:5.3px;top:546px;font-size:7.2px;line-height:7.2px;color:#555;transform:scaleX(0.89);transform-origin:0 0;">Seleção: Área do gráfico</div>
<div class="a" style="left:1009px;top:543px;width:0.8px;height:10px;background:#dcdcdc;"></div>
<div class="a" style="left:0px;top:553.9px;width:1024px;height:22.1px;background:#1b1b1b;"></div>
<div class="a" style="left:1019px;top:553.9px;width:5px;height:22.1px;background:#2c2c2c;"></div>
<svg class="a" style="left:0px;top:550px;" width="26" height="26" viewBox="0 0 26 26"><circle cx="11.7" cy="14.8" r="7.7" fill="none" stroke="#d8d8d8" stroke-width="1.25"/><path d="M7.8 561 V566.3 Q7.8 568.2 9.7 568.2 H13.9 Q15.7 568.2 15.7 566.4 V564.2 Q15.7 562.3 13.95 562.3 Q12.2 562.3 12.2 564.2 V566.5 M12.2 564.2 Q12.2 562.3 10.8 562.3 Q9.9 562.3 9.9 563.6 V566.5" fill="none" stroke="#d8d8d8" stroke-width="1.1" transform="translate(0,-550)"/></svg>
<div class="a" style="left:27.3px;top:556px;width:0.9px;height:20px;background:#2e2e2e;"></div>
<svg class="a" style="left:34.5px;top:557px;" width="17" height="15" viewBox="0 0 17 15"><path d="M0.8 1.5q0-1 1-1h4.5l1.5 1.5h7.5q1 0 1 1v10.5q0 0.8-0.8 0.8h-13.9q-0.8 0-0.8-0.8z" fill="#f5c56e"/><rect x="1.5" y="3.3" width="13.5" height="1.2" fill="#fbe3b8"/></svg>
<svg class="a" style="left:57.5px;top:556.5px;" width="18" height="17" viewBox="0 0 18 17"><defs><linearGradient id="ff" x1="0" y1="0" x2="1" y2="1"><stop offset="0" stop-color="#ff7a3c"/><stop offset="1" stop-color="#f33b5a"/></linearGradient></defs><rect x="1" y="1" width="15.5" height="15.5" rx="3.5" fill="url(#ff)"/><circle cx="8.8" cy="9.3" r="4.3" fill="none" stroke="#fff" stroke-width="2.3"/><rect x="9" y="3.5" width="4" height="3" fill="#f45a4c"/></svg>
<svg class="a" style="left:57px;top:554.5px;" width="8" height="8" viewBox="0 0 8 8"><circle cx="4.4" cy="4" r="3.5" fill="#2b95db"/><text x="4.4" y="6" font-size="5" fill="#fff" text-anchor="middle" font-family="Liberation Sans">3</text></svg>
<svg class="a" style="left:81.5px;top:556.5px;" width="17" height="17" viewBox="0 0 17 17"><rect x="0.8" y="0.8" width="14.8" height="15" rx="3" fill="#2f2f2f" stroke="#3a3a3a" stroke-width="0.6"/><path d="M2.8 3v2.5" stroke="#ddd" stroke-width="1.2"/><path d="M5 6.5h2.2" stroke="#ccc" stroke-width="1"/></svg>
<svg class="a" style="left:105px;top:556.5px;" width="17" height="17" viewBox="0 0 17 17"><rect x="0.8" y="0.8" width="14.8" height="15" rx="3" fill="#2e3a2e"/><path d="M1.5 9.8h2.5l1.2-5.5 1.6 8 1.2-4 1 1.5h5" fill="none" stroke="#23c23a" stroke-width="0.9"/></svg>
<svg class="a" style="left:128.5px;top:556.5px;" width="17" height="17" viewBox="0 0 17 17"><defs><linearGradient id="cg" x1="0" y1="0" x2="0" y2="1"><stop offset="0" stop-color="#3ccf3c"/><stop offset="1" stop-color="#1ea61e"/></linearGradient></defs><rect x="0.6" y="0.6" width="15.2" height="15.4" rx="3.5" fill="url(#cg)"/><rect x="3" y="4" width="10.5" height="7.5" fill="none" stroke="#fff" stroke-width="0.9"/><path d="M3 6.5h10.5M3 9h10.5M6.5 4v7.5M10 4v7.5" stroke="#fff" stroke-width="0.7"/></svg>
<div class="a" style="left:32px;top:575px;width:21px;height:1px;background:#2b95db;"></div>
<div class="a" style="left:55.9px;top:575px;width:20.3px;height:1px;background:#2b95db;"></div>
<div class="a" style="left:79.5px;top:575px;width:20.3px;height:1px;background:#2b95db;"></div>
<div class="a" style="left:103px;top:575px;width:19.9px;height:1px;background:#2b95db;"></div>
<div class="a" style="left:126px;top:575px;width:20.7px;height:1px;background:#2b95db;"></div>
<svg class="a" style="left:0px;top:0px;" width="1024" height="576" viewBox="0 0 1024 576"><ellipse cx="929.3" cy="565.4" rx="3.2" ry="4.7" fill="#d4d4d4"/><path d="M927.8 563.3 L930.8 566.6 L929.3 568 V562.8 L930.8 564.2 L927.8 567.5" fill="none" stroke="#3a3a3a" stroke-width="0.7"/><rect x="939.3" y="561.8" width="7.4" height="7.9" rx="1.2" fill="none" stroke="#c8c8c8" stroke-width="1.1"/><rect x="941.8" y="560.7" width="2.4" height="1.6" fill="#c8c8c8"/><path d="M941.4 563.8V568M944.6 563.8V568M941.4 565.9H944.6" stroke="#b8b8b8" stroke-width="0.8"/><path d="M956.8 561.2 L960.9 562.6 V565.5 Q960.9 568.7 956.8 570.2 Q952.7 568.7 952.7 565.5 V562.6 Z" fill="none" stroke="#c8c8c8" stroke-width="1"/><path d="M956.8 562.6 V568.8 Q954.1 567.6 954.1 565.3 V563.5 Z" fill="#b8b8b8"/><circle cx="959.6" cy="568.2" r="1.8" fill="#f47a2a"/><path d="M972.2 569.2 L967.9 563 Q972.2 560 976.5 563 Z" fill="#c6c6c6"/><path d="M969.6 564.6 Q972.2 563 974.8 564.6" fill="none" stroke="#9a9a9a" stroke-width="0.5"/><path d="M982.8 563.8 H984.6 L987.4 561.4 V569.6 L984.6 567.2 H982.8 Z" fill="#e0e0e0"/><path d="M988.7 563.4 Q989.8 565.5 988.7 567.6" fill="none" stroke="#d0d0d0" stroke-width="0.9"/><path d="M990.4 562.1 Q992.1 565.5 990.4 568.9" fill="none" stroke="#8a8a8a" stroke-width="0.9"/></svg>
<div class="t" style="left:997.8px;top:562px;font-size:7.6px;line-height:7.6px;color:#e0e0e0;font-weight:bold;transform:scaleX(0.96);transform-origin:0 0;">11:15</div>
<div class="a" style="left:487.3px;top:109.3px;width:505px;height:243.6px;background:#f4f4f4;box-sizing:border-box;border:1px solid #bdbdbd;border-radius:4px 4px 0 0;box-shadow:0 2px 8px rgba(0,0,0,0.3)"></div>
<div class="a" style="left:488.3px;top:110.3px;width:503px;height:16.4px;background:#e8e8e8;border-radius:3px 3px 0 0"></div>
<div class="t" style="left:716px;top:115px;font-size:7.6px;line-height:7.6px;color:#3c3c3c;font-weight:bold;transform:scaleX(0.88);transform-origin:0 0;">Tipo de gráfico</div>
<svg class="a" style="left:977px;top:112.5px;" width="12" height="12" viewBox="0 0 12 12"><circle cx="5.9" cy="5.8" r="5" fill="#1f9ede"/><path d="M4.1 4l3.6 3.6M7.7 4l-3.6 3.6" stroke="#fff" stroke-width="1.3"/></svg>
<div class="a" style="left:490.9px;top:130.4px;width:106.9px;height:219.5px;background:#ffffff;border-right:1px solid #e0e0e0"></div>
<div class="a" style="left:490.9px;top:130.4px;width:106.9px;height:15.3px;background:#1e9bdc;"></div>
<div class="t" style="left:497.6px;top:135px;font-size:8px;line-height:8px;color:#ffffff;transform:scaleX(0.91);transform-origin:0 0;">Tipo de gráfico</div>
<div class="t" style="left:497.6px;top:150px;font-size:8px;line-height:8px;color:#5a5a5a;transform:scaleX(0.89);transform-origin:0 0;">Intervalo de dados</div>
<div class="t" style="left:497.6px;top:165px;font-size:8px;line-height:8px;color:#5a5a5a;transform:scaleX(0.86);transform-origin:0 0;">Série de dados</div>
<div class="t" style="left:497.6px;top:180px;font-size:8px;line-height:8px;color:#5a5a5a;transform:scaleX(0.9);transform-origin:0 0;">Elementos do gráfico</div>
<div class="t" style="left:608.3px;top:141px;font-size:8px;line-height:8px;color:#333;font-weight:bold;transform:scaleX(0.84);transform-origin:0 0;">Escolha um tipo de gráfico</div>
<div class="a" style="left:607.9px;top:151.6px;width:61.6px;height:163.6px;background:#ffffff;box-sizing:border-box;border:1px solid #dadada"></div>
<div class="t" style="left:621.4px;top:155px;font-size:8px;line-height:8px;color:#5a5a5a;transform:scaleX(0.86);transform-origin:0 0;">Coluna</div>
<div class="t" style="left:621.4px;top:167px;font-size:8px;line-height:8px;color:#5a5a5a;transform:scaleX(0.84);transform-origin:0 0;">Barra</div>
<div class="a" style="left:608.5px;top:175.34px;width:60.4px;height:11.7px;background:#1e9bdc;"></div>
<div class="t" style="left:621.4px;top:178px;font-size:8px;line-height:8px;color:#ffffff;transform:scaleX(0.8);transform-origin:0 0;">Pizza</div>
<div class="t" style="left:621.4px;top:190px;font-size:8px;line-height:8px;color:#5a5a5a;transform:scaleX(0.87);transform-origin:0 0;">Área</div>
<div class="t" style="left:621.4px;top:202px;font-size:8px;line-height:8px;color:#5a5a5a;transform:scaleX(0.88);transform-origin:0 0;">Linha</div>
<div class="t" style="left:621.4px;top:214px;font-size:8px;line-height:8px;color:#5a5a5a;transform:scaleX(0.85);transform-origin:0 0;">XY (Dispersão)</div>
<div class="t" style="left:621.4px;top:225px;font-size:8px;line-height:8px;color:#5a5a5a;transform:scaleX(0.86);transform-origin:0 0;">Bolha</div>
<div class="t" style="left:621.4px;top:237px;font-size:8px;line-height:8px;color:#5a5a5a;transform:scaleX(0.83);transform-origin:0 0;">Rede</div>
<div class="t" style="left:621.4px;top:249px;font-size:8px;line-height:8px;color:#5a5a5a;transform:scaleX(0.86);transform-origin:0 0;">Cotações</div>
<div class="t" style="left:621.4px;top:260px;font-size:8px;line-height:8px;color:#5a5a5a;transform:scaleX(0.87);transform-origin:0 0;">Coluna e linha</div>
<svg class="a" style="left:0px;top:0px;" width="1024" height="576" viewBox="0 0 1024 576"><g transform="translate(609.5,152.6)"><rect x="0.5" y="4" width="2" height="5.5" fill="#5b9de0"/><rect x="3" y="1" width="2.2" height="8.5" fill="#f2b562"/><rect x="5.7" y="4.5" width="2" height="5" fill="#666"/><path d="M0 9.7h8" stroke="#555" stroke-width="0.6"/></g><g transform="translate(609.5,164.32)"><rect x="0.5" y="1.2" width="4" height="2" fill="#5b9de0"/><rect x="0.5" y="3.8" width="7.5" height="2.2" fill="#f2b562"/><rect x="0.5" y="6.6" width="5" height="2" fill="#666"/><path d="M0.3 0.5v9h8" fill="none" stroke="#555" stroke-width="0.6"/></g><g transform="translate(609.5,176.04)"><circle cx="4.5" cy="5" r="4" fill="#6a6a6a"/><path d="M4.5 5v-4a4 4 0 0 1 4 4z" fill="#f6c77a"/><path d="M4.5 5h4a4 4 0 0 1-3 3.9z" fill="#7fb6ea"/></g><g transform="translate(609.5,187.76)"><path d="M0.5 9.5v-7l2.5 3 2.5-4 3 4v4z" fill="#5f6b78"/><path d="M0.5 9.5v-3l2.5 1.5 2.5-2 3 2v3.5z" fill="#4a90d9"/></g><g transform="translate(609.5,199.48)"><path d="M0.3 0.5v9h8.5" fill="none" stroke="#555" stroke-width="0.6"/><path d="M1 6l2.5-4 2 2.5 2.5-2" fill="none" stroke="#f2a040" stroke-width="0.8"/><path d="M1 8.5l2.5-2.5 2 1.5 2.5-3" fill="none" stroke="#4a90d9" stroke-width="0.8"/></g><g transform="translate(609.5,211.2)"><path d="M0.3 0.5v9h8.5" fill="none" stroke="#555" stroke-width="0.6"/><circle cx="2" cy="7" r="0.7" fill="#f2a040"/><circle cx="3.5" cy="4" r="0.7" fill="#4a90d9"/><circle cx="5" cy="6" r="0.7" fill="#4a90d9"/><circle cx="6.5" cy="2.5" r="0.7" fill="#f2a040"/><circle cx="7.5" cy="7.5" r="0.7" fill="#4a90d9"/><circle cx="5" cy="8.3" r="0.7" fill="#f2a040"/></g><g transform="translate(609.5,222.92)"><path d="M0.3 0.5v9h8.5" fill="none" stroke="#555" stroke-width="0.6"/><circle cx="3" cy="2.5" r="1.5" fill="#f2b562"/><circle cx="6" cy="5" r="1.3" fill="#4a90d9"/><circle cx="2.5" cy="7" r="1" fill="#4a90d9"/><circle cx="6.5" cy="8" r="0.9" fill="#f2b562"/></g><g transform="translate(609.5,234.64)"><path d="M4.5 0.5l4 3-1.5 5.5h-5l-1.5-5.5z" fill="#f6b0a0" stroke="#4a90d9" stroke-width="0.8"/><path d="M2.5 2.5l4 4.5M6.5 2.5l-4 4.5" stroke="#d84040" stroke-width="0.8"/></g><g transform="translate(609.5,246.36)"><path d="M0.3 0.5v9h8.5" fill="none" stroke="#555" stroke-width="0.6"/><rect x="2" y="4" width="1.6" height="5" fill="#555"/><rect x="4.5" y="5" width="1.6" height="4" fill="#777"/><rect x="7" y="3.5" width="1.6" height="5.5" fill="#555"/><path d="M3 1l1.5 1.5" stroke="#666" stroke-width="0.6"/></g><g transform="translate(609.5,258.08)"><path d="M0.3 0.5v9h8.5" fill="none" stroke="#555" stroke-width="0.6"/><rect x="1.5" y="4" width="1.8" height="5" fill="#2f7fd0"/><rect x="4" y="2.5" width="1.8" height="6.5" fill="#2f7fd0"/><rect x="6.5" y="5" width="1.8" height="4" fill="#2f7fd0"/><path d="M1 2l3 3 4-4" fill="none" stroke="#e04040" stroke-width="0.8"/></g></svg>
<div class="a" style="left:676.3px;top:151.5px;width:302.5px;height:47.9px;background:#f2f2f2;box-sizing:border-box;border:1px solid #dcdcdc"></div>
<div class="a" style="left:677.8px;top:152.3px;width:73.8px;height:36px;background:#ffffff;"></div>
<div class="a" style="left:753.6px;top:152.3px;width:72.7px;height:36px;background:#ffffff;"></div>
<div class="a" style="left:829.2px;top:152.3px;width:72.8px;height:36px;background:#ffffff;"></div>
<div class="a" style="left:903.5px;top:152.3px;width:73.5px;height:36px;background:#ffffff;"></div>
<div class="a" style="left:677.8px;top:152.3px;width:73.8px;height:36.2px;background:transparent;box-sizing:border-box;border:2px solid #1e9bdc"></div>
<svg class="a" style="left:0px;top:0px;" width="1024" height="576" viewBox="0 0 1024 576"><rect x="698" y="157" width="32" height="28" fill="#f8f8f8"/><ellipse cx="714" cy="172.5" rx="11.5" ry="8.5" fill="#6d6d6d"/><ellipse cx="714" cy="170" rx="11.5" ry="8.5" fill="#727272" stroke="#555" stroke-width="0.5"/><path d="M714 170 L714 161.5 A11.5 8.5 0 0 1 725.15 172.12 Z" fill="#7db5e8" stroke="#3a8ad6" stroke-width="0.6"/><path d="M714 170 L725.15 172.12 A11.5 8.5 0 0 1 709.98 177.99 Z" fill="#f7d088" stroke="#eda85a" stroke-width="0.6"/></svg>
<svg class="a" style="left:0px;top:0px;" width="1024" height="576" viewBox="0 0 1024 576"><rect x="774.1" y="157.3" width="31.6" height="26.9" fill="#f9f9f9"/><path d="M787.45 161.03 L785.31 161.32 L783.26 161.9 L781.39 162.75 L779.76 163.83 L778.41 165.12 L777.4 166.57 L776.76 168.14 L776.5 169.76 L776.65 171.4 L777.18 172.99 L778.09 174.47 L779.34 175.82 L780.9 176.96 L782.71 177.88 L784.7 178.54 L786.83 178.91 L788.5 170Z" fill="#5e5e5e" stroke="#555555" stroke-width="0.5"/><path d="M787.45 159.03 L785.31 159.32 L783.26 159.9 L781.39 160.75 L779.76 161.83 L778.41 163.12 L777.4 164.57 L776.76 166.14 L776.5 167.76 L776.65 169.4 L777.18 170.99 L778.09 172.47 L779.34 173.82 L780.9 174.96 L782.71 175.88 L784.7 176.54 L786.83 176.91 L788.5 168Z" fill="#737373" stroke="#555555" stroke-width="0.5"/><path d="M802.19 169.31 L802.29 168.46 L802.27 167.61 L802.11 166.76 L801.83 165.93 L801.41 165.12 L800.88 164.35 L800.23 163.63 L799.48 162.95 L798.62 162.34 L797.68 161.79 L796.66 161.32 L795.57 160.92 L794.43 160.61 L793.24 160.38 L792.03 160.25 L790.8 160.2 L790.8 168.2Z" fill="#5fa0de" stroke="#3b8fd9" stroke-width="0.5"/><path d="M802.19 167.31 L802.29 166.46 L802.27 165.61 L802.11 164.76 L801.83 163.93 L801.41 163.12 L800.88 162.35 L800.23 161.63 L799.48 160.95 L798.62 160.34 L797.68 159.79 L796.66 159.32 L795.57 158.92 L794.43 158.61 L793.24 158.38 L792.03 158.25 L790.8 158.2 L790.8 166.2Z" fill="#80b8ec" stroke="#3b8fd9" stroke-width="0.5"/><path d="M785.49 180.84 L786.65 181.16 L787.85 181.37 L789.07 181.48 L790.3 181.49 L791.52 181.4 L792.73 181.2 L793.9 180.91 L795.02 180.52 L796.08 180.04 L797.08 179.47 L797.98 178.82 L798.8 178.1 L799.51 177.32 L800.11 176.48 L800.6 175.6 L800.96 174.68 L789.8 172.5Z" fill="#f3c176" stroke="#eba95a" stroke-width="0.5"/><path d="M785.49 178.64 L786.65 178.96 L787.85 179.17 L789.07 179.28 L790.3 179.29 L791.52 179.2 L792.73 179 L793.9 178.71 L795.02 178.32 L796.08 177.84 L797.08 177.27 L797.98 176.62 L798.8 175.9 L799.51 175.12 L800.11 174.28 L800.6 173.4 L800.96 172.48 L789.8 170.3Z" fill="#f9d690" stroke="#eba95a" stroke-width="0.5"/><rect x="849.7" y="157.3" width="31" height="26.9" fill="#f9f9f9"/><path d="M865 162 L863.06 162.13 L861.18 162.51 L859.41 163.13 L857.8 163.98 L856.4 165.03 L855.23 166.25 L854.35 167.6 L853.77 169.05 L853.51 170.56 L853.58 172.08 L853.98 173.57 L854.69 174.98 L855.69 176.28 L856.96 177.43 L858.46 178.4 L860.14 179.16 L862.89 174.44 L862.15 174.12 L861.5 173.72 L860.95 173.23 L860.52 172.68 L860.21 172.08 L860.04 171.45 L860.01 170.81 L860.12 170.18 L860.37 169.56 L860.75 168.99 L861.26 168.48 L861.87 168.04 L862.57 167.68 L863.34 167.42 L864.16 167.25 L865 167.2Z" fill="#5e5e5e" stroke="#555555" stroke-width="0.5"/><path d="M865 159.5 L863.06 159.63 L861.18 160.01 L859.41 160.63 L857.8 161.48 L856.4 162.53 L855.23 163.75 L854.35 165.1 L853.77 166.55 L853.51 168.06 L853.58 169.58 L853.98 171.07 L854.69 172.48 L855.69 173.78 L856.96 174.93 L858.46 175.9 L860.14 176.66 L862.89 171.94 L862.15 171.62 L861.5 171.22 L860.95 170.73 L860.52 170.18 L860.21 169.58 L860.04 168.95 L860.01 168.31 L860.12 167.68 L860.37 167.06 L860.75 166.49 L861.26 165.98 L861.87 165.54 L862.57 165.18 L863.34 164.92 L864.16 164.75 L865 164.7Z" fill="#737373" stroke="#555555" stroke-width="0.5"/><path d="M876.83 171.06 L876.98 170.09 L876.99 169.11 L876.87 168.13 L876.61 167.17 L876.22 166.24 L875.7 165.34 L875.06 164.5 L874.31 163.71 L873.45 163 L872.5 162.36 L871.47 161.81 L870.36 161.34 L869.2 160.98 L867.99 160.71 L866.75 160.55 L865.5 160.5 L865.5 165.7 L866.04 165.72 L866.58 165.79 L867.11 165.9 L867.61 166.06 L868.09 166.25 L868.54 166.49 L868.96 166.76 L869.33 167.06 L869.66 167.39 L869.94 167.75 L870.16 168.12 L870.33 168.52 L870.44 168.92 L870.5 169.33 L870.49 169.75 L870.42 170.16Z" fill="#5fa0de" stroke="#3b8fd9" stroke-width="0.5"/><path d="M876.83 169.06 L876.98 168.09 L876.99 167.11 L876.87 166.13 L876.61 165.17 L876.22 164.24 L875.7 163.34 L875.06 162.5 L874.31 161.71 L873.45 161 L872.5 160.36 L871.47 159.81 L870.36 159.34 L869.2 158.98 L867.99 158.71 L866.75 158.55 L865.5 158.5 L865.5 163.7 L866.04 163.72 L866.58 163.79 L867.11 163.9 L867.61 164.06 L868.09 164.25 L868.54 164.49 L868.96 164.76 L869.33 165.06 L869.66 165.39 L869.94 165.75 L870.16 166.12 L870.33 166.52 L870.44 166.92 L870.5 167.33 L870.49 167.75 L870.42 168.16Z" fill="#80b8ec" stroke="#3b8fd9" stroke-width="0.5"/><path d="M859.25 180.36 L860.46 180.81 L861.73 181.15 L863.05 181.38 L864.4 181.49 L865.75 181.48 L867.1 181.36 L868.41 181.12 L869.68 180.77 L870.88 180.3 L872 179.74 L873.02 179.09 L873.94 178.35 L874.73 177.54 L875.38 176.66 L875.89 175.73 L876.25 174.77 L869.4 173.73 L869.26 174.13 L869.06 174.51 L868.81 174.87 L868.5 175.2 L868.14 175.51 L867.74 175.78 L867.3 176.01 L866.83 176.2 L866.33 176.34 L865.82 176.44 L865.29 176.49 L864.76 176.5 L864.24 176.45 L863.72 176.36 L863.22 176.22 L862.75 176.03Z" fill="#f3c176" stroke="#eba95a" stroke-width="0.5"/><path d="M859.25 177.86 L860.46 178.31 L861.73 178.65 L863.05 178.88 L864.4 178.99 L865.75 178.98 L867.1 178.86 L868.41 178.62 L869.68 178.27 L870.88 177.8 L872 177.24 L873.02 176.59 L873.94 175.85 L874.73 175.04 L875.38 174.16 L875.89 173.23 L876.25 172.27 L869.4 171.23 L869.26 171.63 L869.06 172.01 L868.81 172.37 L868.5 172.7 L868.14 173.01 L867.74 173.28 L867.3 173.51 L866.83 173.7 L866.33 173.84 L865.82 173.94 L865.29 173.99 L864.76 174 L864.24 173.95 L863.72 173.86 L863.22 173.72 L862.75 173.53Z" fill="#f9d690" stroke="#eba95a" stroke-width="0.5"/><rect x="924.2" y="157.3" width="32.4" height="27.2" fill="#f9f9f9"/><path d="M936.45 162.04 L934.31 162.33 L932.26 162.92 L930.39 163.79 L928.76 164.9 L927.41 166.21 L926.4 167.7 L925.76 169.3 L925.5 170.96 L925.65 172.63 L926.18 174.25 L927.09 175.77 L928.34 177.14 L929.9 178.32 L931.71 179.26 L933.7 179.93 L935.83 180.31 L936.94 174.17 L936.23 174.05 L935.57 173.83 L934.97 173.52 L934.45 173.14 L934.03 172.69 L933.73 172.2 L933.55 171.67 L933.5 171.12 L933.59 170.58 L933.8 170.06 L934.14 169.57 L934.59 169.14 L935.13 168.78 L935.75 168.5 L936.44 168.31 L937.15 168.21Z" fill="#5e5e5e" stroke="#555555" stroke-width="0.5"/><path d="M936.45 159.84 L934.31 160.13 L932.26 160.72 L930.39 161.59 L928.76 162.7 L927.41 164.01 L926.4 165.5 L925.76 167.1 L925.5 168.76 L925.65 170.43 L926.18 172.05 L927.09 173.57 L928.34 174.94 L929.9 176.12 L931.71 177.06 L933.7 177.73 L935.83 178.11 L936.94 171.97 L936.23 171.85 L935.57 171.63 L934.97 171.32 L934.45 170.94 L934.03 170.49 L933.73 170 L933.55 169.47 L933.5 168.92 L933.59 168.38 L933.8 167.86 L934.14 167.37 L934.59 166.94 L935.13 166.58 L935.75 166.3 L936.44 166.11 L937.15 166.01Z" fill="#737373" stroke="#555555" stroke-width="0.5"/><path d="M953.43 169.99 L953.5 169 L953.43 168.01 L953.22 167.02 L952.86 166.06 L952.38 165.14 L951.76 164.25 L951.02 163.42 L950.16 162.64 L949.2 161.94 L948.14 161.31 L947 160.77 L945.79 160.32 L944.52 159.96 L943.2 159.71 L941.86 159.55 L940.5 159.5 L940.5 166 L940.92 166.02 L941.33 166.07 L941.74 166.15 L942.13 166.26 L942.5 166.4 L942.85 166.57 L943.18 166.77 L943.47 166.99 L943.74 167.24 L943.96 167.5 L944.15 167.78 L944.3 168.07 L944.41 168.38 L944.48 168.69 L944.5 169 L944.48 169.31Z" fill="#5fa0de" stroke="#3b8fd9" stroke-width="0.5"/><path d="M953.43 167.99 L953.5 167 L953.43 166.01 L953.22 165.02 L952.86 164.06 L952.38 163.14 L951.76 162.25 L951.02 161.42 L950.16 160.64 L949.2 159.94 L948.14 159.31 L947 158.77 L945.79 158.32 L944.52 157.96 L943.2 157.71 L941.86 157.55 L940.5 157.5 L940.5 164 L940.92 164.02 L941.33 164.07 L941.74 164.15 L942.13 164.26 L942.5 164.4 L942.85 164.57 L943.18 164.77 L943.47 164.99 L943.74 165.24 L943.96 165.5 L944.15 165.78 L944.3 166.07 L944.41 166.38 L944.48 166.69 L944.5 167 L944.48 167.31Z" fill="#80b8ec" stroke="#3b8fd9" stroke-width="0.5"/><path d="M934.82 181.71 L936.11 182.04 L937.44 182.27 L938.79 182.38 L940.15 182.39 L941.51 182.28 L942.84 182.05 L944.13 181.72 L945.37 181.29 L946.54 180.75 L947.62 180.12 L948.6 179.41 L949.48 178.62 L950.24 177.76 L950.87 176.84 L951.37 175.88 L951.73 174.88 L942.92 173.48 L942.82 173.78 L942.68 174.06 L942.51 174.33 L942.3 174.59 L942.05 174.82 L941.77 175.03 L941.47 175.21 L941.14 175.37 L940.8 175.5 L940.44 175.6 L940.06 175.66 L939.68 175.7 L939.3 175.7 L938.92 175.66 L938.55 175.59 L938.19 175.5Z" fill="#f3c176" stroke="#eba95a" stroke-width="0.5"/><path d="M934.82 179.31 L936.11 179.64 L937.44 179.87 L938.79 179.98 L940.15 179.99 L941.51 179.88 L942.84 179.65 L944.13 179.32 L945.37 178.89 L946.54 178.35 L947.62 177.72 L948.6 177.01 L949.48 176.22 L950.24 175.36 L950.87 174.44 L951.37 173.48 L951.73 172.48 L942.92 171.08 L942.82 171.38 L942.68 171.66 L942.51 171.93 L942.3 172.19 L942.05 172.42 L941.77 172.63 L941.47 172.81 L941.14 172.97 L940.8 173.1 L940.44 173.2 L940.06 173.26 L939.68 173.3 L939.3 173.3 L938.92 173.26 L938.55 173.19 L938.19 173.1Z" fill="#f9d690" stroke="#eba95a" stroke-width="0.5"/></svg>
<div class="t" style="left:816.25px;top:190px;font-size:7.2px;line-height:7.2px;color:#333;transform:scaleX(0.93);transform-origin:0 0;">Normal</div>
<div class="a" style="left:677.8px;top:208.2px;width:7.4px;height:7.3px;background:#1e9bdc;border-radius:1.2px"></div>
<svg class="a" style="left:677.8px;top:208.2px;" width="8" height="8" viewBox="0 0 8 8"><path d="M1.6 3.8l1.8 1.8 3-3.5" fill="none" stroke="#fff" stroke-width="1.2"/></svg>
<div class="t" style="left:687.5px;top:208px;font-size:7.5px;line-height:7.5px;color:#444;transform:scaleX(0.94);transform-origin:0 0;">Aparência 3D</div>
<div class="a" style="left:735.3px;top:203px;width:243.5px;height:17.7px;background:#f9f9f9;box-sizing:border-box;border:1px solid #dcdcdc;border-radius:2px"></div>
<div class="t" style="left:739.8px;top:209px;font-size:7.5px;line-height:7.5px;color:#444;transform:scaleX(0.85);transform-origin:0 0;">Realista</div>
<svg class="a" style="left:967px;top:210.5px;" width="8" height="4" viewBox="0 0 8 4"><path d="M0.3 0.2h6.5l-3.25 3.3z" fill="#222"/></svg>
<div class="a" style="left:601.7px;top:328.5px;width:50.8px;height:17.9px;background:#f7f7f7;box-sizing:border-box;border:1px solid #d8d8d8;border-radius:2px"></div>
<div class="t" style="left:617.85px;top:334px;font-size:7.5px;line-height:7.5px;color:#3a3a3a;transform:scaleX(0.96);transform-origin:0 0;">Ajuda</div>
<div class="a" style="left:771.2px;top:328.5px;width:50.9px;height:17.9px;background:#f7f7f7;box-sizing:border-box;border:1px solid #d8d8d8;border-radius:2px"></div>
<div class="t" style="left:780.65px;top:334px;font-size:7.5px;line-height:7.5px;color:#b0b0b0;transform:scaleX(0.99);transform-origin:0 0;">< Anterior</div>
<div class="a" style="left:825.6px;top:328.5px;width:50.9px;height:17.9px;background:#f7f7f7;box-sizing:border-box;border:1px solid #d8d8d8;border-radius:2px"></div>
<div class="t" style="left:834.3px;top:334px;font-size:7.5px;line-height:7.5px;color:#3a3a3a;transform:scaleX(0.99);transform-origin:0 0;">Próximo ></div>
<div class="a" style="left:880.2px;top:328.5px;width:50.4px;height:17.9px;background:#f7f7f7;box-sizing:border-box;border:1px solid #d8d8d8;border-radius:2px"></div>
<div class="t" style="left:891.4px;top:334px;font-size:7.5px;line-height:7.5px;color:#3a3a3a;transform:scaleX(0.93);transform-origin:0 0;">Cancelar</div>
<div class="a" style="left:934.6px;top:328.5px;width:50.8px;height:17.9px;background:#f7f7f7;box-sizing:border-box;border:1px solid #d8d8d8;border-radius:2px"></div>
<div class="t" style="left:946.75px;top:334px;font-size:7.5px;line-height:7.5px;color:#3a3a3a;transform:scaleX(0.94);transform-origin:0 0;">Finalizar</div>
<svg class="a" style="left:656.2px;top:183.8px;" width="10" height="12" viewBox="0 0 10 12"><path d="M0.8 0.8l8.6 6.6-3.6 0.5 1.5 3-1.9 0.9-1.5-3.1-2.9 2.4z" fill="#111"/></svg>
<div class="a" style="left:992px;top:278px;width:3.8px;height:38.8px;background:#262626;"></div>
<svg class="a" style="left:992.5px;top:294.5px;" width="3" height="5" viewBox="0 0 3 5"><path d="M0.3 0.3l2.2 2.2-2.2 2.2z" fill="#ddd"/></svg>
</body></html>
